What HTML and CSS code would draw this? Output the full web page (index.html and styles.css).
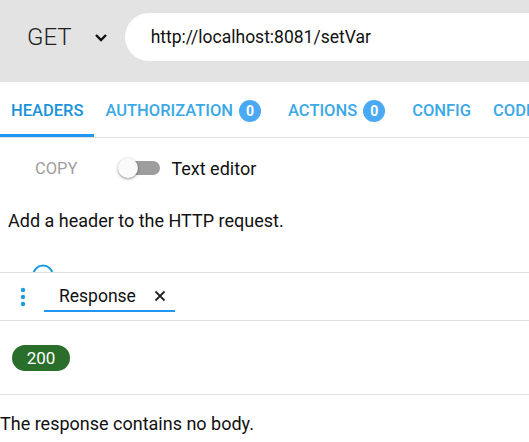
FILE: index.html
```html
<!DOCTYPE html>
<html>
<head>
<meta charset="utf-8">
<link rel="stylesheet" href="styles.css">
</head>
<body>
<section class="request">
  <div class="topbar">
    <div class="method">GET</div>
    <svg class="chev" width="14" height="10" viewBox="0 0 14 10"><path d="M2 2 L7 7 L12 2" fill="none" stroke="#111" stroke-width="2.4"/></svg>
    <div class="url">http://localhost:8081/setVar</div>
  </div>
  <nav class="tabs">
    <div class="tab active">HEADERS</div>
    <div class="tab">AUTHORIZATION <span class="badge">0</span></div>
    <div class="tab">ACTIONS <span class="badge">0</span></div>
    <div class="tab">CONFIG</div>
    <div class="tab">CODE</div>
  </nav>
  <div class="toolbar">
    <button class="copy">COPY</button>
    <span class="switch"><span class="track"></span><span class="thumb"></span></span>
    <span class="switch-label">Text editor</span>
  </div>
  <p class="hint">Add a header to the HTTP request.</p>
  <div class="add">
    <svg width="22" height="22" viewBox="0 0 22 22"><circle cx="11" cy="11" r="9.5" fill="none" stroke="#1e9be0" stroke-width="2"/></svg>
  </div>
</section>
<section class="response">
  <div class="resp-head">
    <svg class="dots" width="6" height="20" viewBox="0 0 6 20"><circle cx="3" cy="3" r="2.2" fill="#1e9be0"/><circle cx="3" cy="10" r="2.2" fill="#1e9be0"/><circle cx="3" cy="17" r="2.2" fill="#1e9be0"/></svg>
    <div class="resp-tab">
      <span>Response</span>
      <svg width="12" height="12" viewBox="0 0 12 12"><path d="M1.5 1.5 L10.5 10.5 M10.5 1.5 L1.5 10.5" stroke="#222" stroke-width="1.8"/></svg>
    </div>
  </div>
  <div class="status-row"><span class="status">200</span></div>
  <p class="nobody">The response contains no body.</p>
</section>
</body>
</html>
```
FILE: styles.css
```css
* { box-sizing: border-box; }
body {
  margin: 0;
  font-family: Roboto, "Noto Sans", sans-serif;
  color: #1a1a1a;
  background: #fff;
  overflow: hidden;
}
.request {
  height: 272px;
  overflow: hidden;
}
.topbar {
  height: 82px;
  background: #e3e3e3;
  display: flex;
  align-items: center;
  padding-left: 27px;
  padding-bottom: 8px;
}
.method {
  font-size: 24px;
  font-weight: 300;
  color: #222;
}
.chev {
  margin-left: 22px;
  margin-top: 1px;
}
.url {
  margin-left: 17px;
  flex: 1;
  height: 48px;
  background: #fff;
  border-radius: 24px 0 0 24px;
  display: flex;
  align-items: center;
  padding-left: 26px;
  font-size: 17.5px;
  color: #111;
}
.tabs {
  height: 56px;
  display: flex;
  border-bottom: 1px solid #e0e0e0;
  white-space: nowrap;
  overflow: hidden;
}
.tab {
  display: flex;
  align-items: center;
  flex-shrink: 0;
  padding: 0 11px;
  font-size: 16.5px;
  font-weight: 500;
  color: #3aa9e6;
  border-bottom: 3px solid transparent;
  padding-top: 5px;
}
.tab.active {
  color: #1a93d9;
  border-bottom-color: #2196f3;
}
.badge {
  display: inline-flex;
  align-items: center;
  justify-content: center;
  width: 22px;
  height: 22px;
  border-radius: 50%;
  background: #4aa9f4;
  color: #fff;
  font-size: 14px;
  font-weight: 700;
  margin-left: 6px;
  margin-right: 5px;
}
.toolbar {
  height: 60px;
  display: flex;
  align-items: center;
  padding-left: 19px;
}
.copy {
  border: 0;
  background: none;
  font-family: inherit;
  font-size: 16.5px;
  color: #9e9e9e;
  padding: 8px 16px;
}
.switch {
  position: relative;
  width: 42px;
  height: 20px;
  margin-left: 25px;
  display: inline-block;
}
.track {
  position: absolute;
  left: 3px;
  right: 0;
  top: 3px;
  height: 14px;
  border-radius: 7px;
  background: #9e9e9e;
}
.thumb {
  position: absolute;
  left: 0;
  top: 0;
  width: 20px;
  height: 20px;
  border-radius: 50%;
  background: #fafafa;
  box-shadow: 0 1px 3px rgba(0,0,0,0.45);
}
.switch-label {
  margin-left: 11px;
  font-size: 18px;
  color: #111;
}
.hint {
  margin: 11px 0 0 8px;
  font-size: 18px;
  line-height: 24px;
  color: #111;
}
.add {
  margin: 31px 0 0 32px;
}
.response {
  border-top: 1px solid #e0e0e0;
}
.resp-head {
  height: 48px;
  display: flex;
  align-items: center;
  border-bottom: 1px solid #e0e0e0;
  padding-left: 20px;
}
.dots { display: block; }
.resp-tab {
  margin-left: 18px;
  height: 31px;
  width: 131px;
  display: flex;
  align-items: center;
  padding-left: 15px;
  border-bottom: 2px solid #2196f3;
  font-size: 17.5px;
  color: #111;
}
.resp-tab svg { margin-left: 18px; }
.status-row {
  height: 74px;
  display: flex;
  align-items: center;
  padding-left: 12px;
  border-bottom: 1px solid #e0e0e0;
}
.status {
  background: #2a6e2b;
  color: #fff;
  font-size: 17px;
  border-radius: 13px;
  height: 26px;
  width: 58px;
  display: inline-flex;
  align-items: center;
  justify-content: center;
}
.nobody {
  margin: 17px 0 0 0;
  font-size: 18px;
  line-height: 24px;
  color: #111;
}
```
